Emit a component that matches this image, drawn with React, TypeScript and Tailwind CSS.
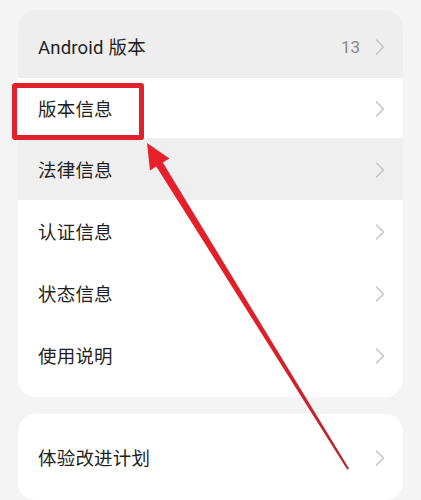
import React from 'react';

const Chevron = () => (
  <svg width="12" height="16" viewBox="0 0 12 16" className="shrink-0">
    <path d="M2.5 1 L9.5 8 L2.5 15" fill="none" stroke="#c6c6c6" strokeWidth="1.6" strokeLinecap="round" strokeLinejoin="round" />
  </svg>
);

type RowProps = {
  label: string;
  value?: string;
  className?: string;
};

const Row: React.FC<RowProps> = ({ label, value, className = '' }) => (
  <div className={`flex items-center justify-between pl-5 pr-[17px] ${className}`}>
    <span className="pt-[6px] text-[18.5px] text-[#1f1f1f] tracking-[0.2px]">{label}</span>
    <div className="flex items-center gap-[14px] pt-[2px]">
      {value && <span className="pt-[2px] text-[17px] text-[#8a8a8a]">{value}</span>}
      <Chevron />
    </div>
  </div>
);

export default function App() {
  return (
    <div
      className="relative w-[421px] h-[500px] overflow-hidden bg-[#f4f4f4]"
      style={{ fontFamily: 'Roboto, "Noto Sans CJK SC", sans-serif' }}
    >
      <div className="flex flex-col gap-[17px] px-[18px] pt-[10px]">
        {/* About phone list */}
        <div className="rounded-[18px] overflow-hidden bg-white">
          <Row label="Android 版本" value="13" className="h-[68px] pt-[4px] bg-[#eeeeee]" />
          <Row label="版本信息" className="h-[60px] bg-white" />
          <Row label="法律信息" className="h-[62px] bg-[#efefef]" />
          <Row label="认证信息" className="h-[62px]" />
          <Row label="状态信息" className="h-[62px]" />
          <Row label="使用说明" className="h-[73px] pb-[11px]" />
        </div>

        {/* Second group */}
        <div className="rounded-[18px] overflow-hidden bg-white">
          <Row label="体验改进计划" className="h-[86px]" />
        </div>
      </div>

      {/* Highlight box */}
      <div className="absolute left-[12px] top-[83px] w-[132px] h-[57px] border-[5px] border-[#e0212c] rounded-[3px]" />

      {/* Arrow */}
      <svg className="absolute inset-0 pointer-events-none" width="421" height="500" viewBox="0 0 421 500">
        <defs>
          <linearGradient id="arrowFill" x1="147" y1="144" x2="348" y2="469" gradientUnits="userSpaceOnUse">
            <stop offset="0" stopColor="#e8202b" />
            <stop offset="0.6" stopColor="#dc2129" />
            <stop offset="1" stopColor="#b3262f" />
          </linearGradient>
        </defs>
        <polygon
          points="147,143 169.5,158.5 162.8,162.6 349,468.6 347.2,469.6 156.3,166.5 150,170.5"
          fill="url(#arrowFill)"
        />
      </svg>
    </div>
  );
}
